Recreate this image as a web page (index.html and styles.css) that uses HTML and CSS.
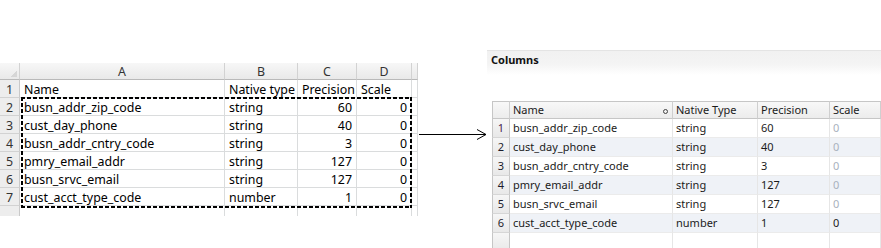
FILE: index.html
```html
<!DOCTYPE html>
<html>
<head>
<meta charset="utf-8">
<link rel="stylesheet" href="styles.css">
</head>
<body>
<div class="page">
  <div class="sheet">
    <table class="xl">
      <colgroup>
        <col class="c-rh"><col class="c-a"><col class="c-b"><col class="c-c"><col class="c-d"><col class="c-e">
      </colgroup>
      <thead>
        <tr><th class="corner"></th><th>A</th><th>B</th><th>C</th><th>D</th><th></th></tr>
      </thead>
      <tbody>
        <tr><td class="rh">1</td><td>Name</td><td>Native type</td><td>Precision</td><td>Scale</td><td></td></tr>
        <tr><td class="rh">2</td><td>busn_addr_zip_code</td><td>string</td><td class="num">60</td><td class="num">0</td><td></td></tr>
        <tr><td class="rh">3</td><td>cust_day_phone</td><td>string</td><td class="num">40</td><td class="num">0</td><td></td></tr>
        <tr><td class="rh">4</td><td>busn_addr_cntry_code</td><td>string</td><td class="num">3</td><td class="num">0</td><td></td></tr>
        <tr><td class="rh">5</td><td>pmry_email_addr</td><td>string</td><td class="num">127</td><td class="num">0</td><td></td></tr>
        <tr><td class="rh">6</td><td>busn_srvc_email</td><td>string</td><td class="num">127</td><td class="num">0</td><td></td></tr>
        <tr><td class="rh">7</td><td>cust_acct_type_code</td><td>number</td><td class="num">1</td><td class="num">0</td><td></td></tr>
        <tr class="partial"><td class="rh"></td><td></td><td></td><td></td><td></td><td></td></tr>
      </tbody>
    </table>
    <div class="ants"></div>
  </div>

  <svg class="arrow" width="68" height="12" viewBox="0 0 68 12">
    <path d="M0 6.5H67M58 1.5L67 6.5L58 11.5" fill="none" stroke="#000" stroke-width="1"/>
  </svg>

  <section class="panel">
    <div class="bar">Columns</div>
    <table class="grid">
      <colgroup>
        <col class="g-rn"><col class="g-name"><col class="g-type"><col class="g-prec"><col class="g-scale">
      </colgroup>
      <thead>
        <tr>
          <th class="rn"></th>
          <th><span class="hname">Name<span class="sort"></span></span></th>
          <th>Native Type</th>
          <th>Precision</th>
          <th>Scale</th>
        </tr>
      </thead>
      <tbody>
        <tr><td class="rn sel">1</td><td>busn_addr_zip_code</td><td>string</td><td>60</td><td class="dim">0</td></tr>
        <tr><td class="rn">2</td><td>cust_day_phone</td><td>string</td><td>40</td><td class="dim">0</td></tr>
        <tr><td class="rn">3</td><td>busn_addr_cntry_code</td><td>string</td><td>3</td><td class="dim">0</td></tr>
        <tr><td class="rn">4</td><td>pmry_email_addr</td><td>string</td><td>127</td><td class="dim">0</td></tr>
        <tr><td class="rn">5</td><td>busn_srvc_email</td><td>string</td><td>127</td><td class="dim">0</td></tr>
        <tr><td class="rn">6</td><td>cust_acct_type_code</td><td>number</td><td>1</td><td>0</td></tr>
        <tr class="empty"><td class="rn"></td><td></td><td></td><td></td><td></td></tr>
      </tbody>
    </table>
  </section>
</div>
</body>
</html>
```
FILE: styles.css
```css
html, body {
  margin: 0;
  padding: 0;
  background: #fff;
}
body {
  width: 881px;
  height: 248px;
  overflow: hidden;
}
.page {
  display: flex;
  align-items: flex-start;
}

/* ---------- Excel sheet ---------- */
.sheet {
  position: relative;
  margin-top: 63px;
  width: 418px;
  font-family: "Noto Sans", "Liberation Sans", sans-serif;
  font-size: 12.4px;
  color: #000;
}
.xl {
  border-collapse: separate;
  border-spacing: 0;
  table-layout: fixed;
  width: 418px;
}
.c-rh { width: 20px; }
.c-a { width: 205px; }
.c-b { width: 73px; }
.c-c { width: 59px; }
.c-d { width: 55px; }
.c-e { width: 6px; }

.xl th {
  height: 17px;
  padding: 1px 0 0;
  box-sizing: border-box;
  background: linear-gradient(#f7f7f7, #e9e9e9);
  border-right: 1px solid #d2d2d2;
  border-bottom: 1px solid #b9b9b9;
  font-weight: normal;
  color: #333;
  line-height: 15px;
  text-align: center;
}
.xl th.corner {
  background:
    linear-gradient(135deg, transparent 62%, #d6d6d6 62%) right 2px bottom 2px / 9px 9px no-repeat,
    linear-gradient(#f7f7f7, #e9e9e9);
}
.xl td {
  height: 18px;
  padding: 2px 4px 0;
  box-sizing: border-box;
  border-right: 1px solid #dadcdd;
  border-bottom: 1px solid #dadcdd;
  line-height: 15px;
  white-space: nowrap;
  overflow: hidden;
}
.xl td.rh {
  padding: 2px 0 0;
  text-align: center;
  color: #333;
  background: #ededed;
  border-right: 1px solid #c9c9c9;
  border-bottom-color: #d2d2d2;
}
.xl td.num { text-align: right; }
.xl tr.partial td {
  height: 10px;
  border-bottom: none;
}
.ants {
  position: absolute;
  left: 21px;
  top: 34px;
  width: 391px;
  height: 111px;
  background:
    repeating-linear-gradient(90deg, #000 0 4px, transparent 4px 6px) left top / 100% 2px no-repeat,
    repeating-linear-gradient(90deg, #000 0 4px, transparent 4px 6px) left bottom / 100% 2px no-repeat,
    repeating-linear-gradient(180deg, #000 0 4px, transparent 4px 6px) left top / 2px 100% no-repeat,
    repeating-linear-gradient(180deg, #000 0 4px, transparent 4px 6px) right top / 2px 100% no-repeat;
}

/* ---------- arrow ---------- */
.arrow {
  display: block;
  flex: none;
  margin-top: 128px;
  margin-left: 1px;
}

/* ---------- Columns panel ---------- */
.panel {
  margin-top: 50px;
  width: 395px;
  flex: none;
  font-family: "Noto Sans", "Liberation Sans", sans-serif;
  font-size: 11px;
  color: #1b1b1b;
}
.bar {
  height: 25px;
  box-sizing: border-box;
  border-top: 1px solid #e4e4e4;
  background: linear-gradient(#f1f1f1, #f4f4f4 55%, #fff);
  padding-left: 4px;
  line-height: 18px;
  font-weight: bold;
  color: #111;
}
.grid {
  margin-top: 26px;
  margin-left: 5px;
  border-collapse: separate;
  border-spacing: 0;
  table-layout: fixed;
  width: 389px;
}
.g-rn { width: 18px; }
.g-name { width: 163px; }
.g-type { width: 85px; }
.g-prec { width: 72px; }
.g-scale { width: 51px; }

.grid th {
  height: 18px;
  box-sizing: border-box;
  padding: 0 3px;
  background: linear-gradient(#f8f8f8, #ececec);
  border-top: 1px solid #c6c6c6;
  border-bottom: 1px solid #c6c6c6;
  border-right: 1px solid #cfcfcf;
  font-weight: normal;
  text-align: left;
  line-height: 16px;
  white-space: nowrap;
}
.grid th.rn {
  border-left: 1px solid #c6c6c6;
}
.hname {
  display: flex;
  justify-content: space-between;
  align-items: center;
}
.sort {
  width: 3px;
  height: 3px;
  border: 1px solid #444;
  border-radius: 50%;
  margin-right: 1px;
  margin-top: 2px;
}
.grid td {
  height: 19px;
  box-sizing: border-box;
  padding: 0 3px;
  border-right: 1px solid #e6e6e6;
  border-bottom: 1px solid #ebebeb;
  line-height: 18px;
  white-space: nowrap;
  overflow: hidden;
  background: #fff;
}
.grid tbody tr:nth-child(even) td {
  background: #eff2f7;
}
.grid td.rn,
.grid tbody tr:nth-child(even) td.rn {
  padding: 0;
  text-align: center;
  background: linear-gradient(#f6f6f6, #e8e8e8);
  border-left: 1px solid #c6c6c6;
  border-right: 1px solid #c6c6c6;
  border-bottom: 1px solid #d6d6d6;
  color: #1b1b2b;
}
.grid td.rn.sel { color: #4a1c4e; }
.grid td.dim { color: #a9b1bd; }
.grid tr.empty td { height: 20px; }
```
